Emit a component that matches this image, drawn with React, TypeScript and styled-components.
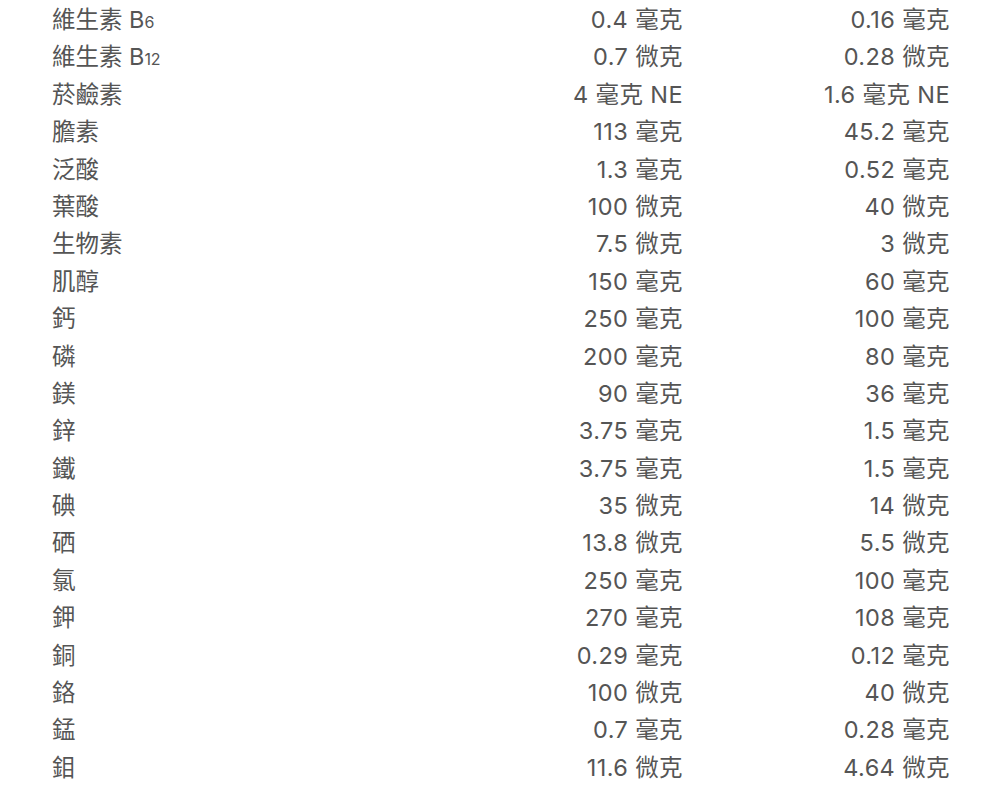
import styled, { createGlobalStyle } from 'styled-components';

const GlobalStyle = createGlobalStyle`
	html, body {
		margin: 0;
		padding: 0;
		background: #fff;
	}
	body {
		font-family: Inter, 'Noto Sans CJK TC', sans-serif;
		color: #555;
	}
`;

const Table = styled.div`
	display: grid;
	grid-template-columns: 1fr 260px 267px;
	width: 898px;
	padding: 1px 0 0 52px;
`;

const Cell = styled.div<{ $num?: boolean }>`
	height: 37.4px;
	line-height: 37.4px;
	font-size: 23.5px;
	white-space: nowrap;
	text-align: ${({ $num }) => ($num ? 'right' : 'left')};
	letter-spacing: ${({ $num }) => ($num ? '0.4px' : '0')};
`;

const Sub = styled.span`
	font-size: 16px;
	letter-spacing: -0.3px;
`;

type Row = [React.ReactNode, string, string];

const rows: Row[] = [
	[<>維生素 B<Sub>6</Sub></>, '0.4 毫克', '0.16 毫克'],
	[<>維生素 B<Sub>12</Sub></>, '0.7 微克', '0.28 微克'],
	['菸鹼素', '4 毫克 NE', '1.6 毫克 NE'],
	['膽素', '113 毫克', '45.2 毫克'],
	['泛酸', '1.3 毫克', '0.52 毫克'],
	['葉酸', '100 微克', '40 微克'],
	['生物素', '7.5 微克', '3 微克'],
	['肌醇', '150 毫克', '60 毫克'],
	['鈣', '250 毫克', '100 毫克'],
	['磷', '200 毫克', '80 毫克'],
	['鎂', '90 毫克', '36 毫克'],
	['鋅', '3.75 毫克', '1.5 毫克'],
	['鐵', '3.75 毫克', '1.5 毫克'],
	['碘', '35 微克', '14 微克'],
	['硒', '13.8 微克', '5.5 微克'],
	['氯', '250 毫克', '100 毫克'],
	['鉀', '270 毫克', '108 毫克'],
	['銅', '0.29 毫克', '0.12 毫克'],
	['鉻', '100 微克', '40 微克'],
	['錳', '0.7 毫克', '0.28 毫克'],
	['鉬', '11.6 微克', '4.64 微克'],
];

export default function App() {
	return (
		<>
			<GlobalStyle />
			<Table>
				{rows.map(([name, a, b], i) => (
					<>
						<Cell key={`n${i}`}>{name}</Cell>
						<Cell key={`a${i}`} $num>{a}</Cell>
						<Cell key={`b${i}`} $num>{b}</Cell>
					</>
				))}
			</Table>
		</>
	);
}
